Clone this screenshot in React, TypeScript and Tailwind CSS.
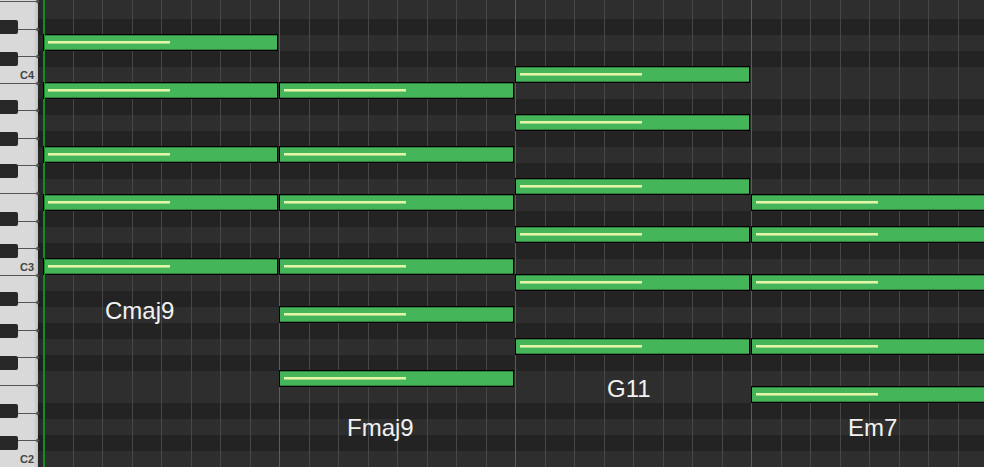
// one row per semitone, top to bottom. The first one (F4) is cut off by the top edge.
const ROWS = [
  { note: "F4" },
  { note: "E4" },
  { note: "D#4", black: true },
  { note: "D4" },
  { note: "C#4", black: true },
  { note: "C4", name: "C4" },
  { note: "B3" },
  { note: "A#3", black: true },
  { note: "A3" },
  { note: "G#3", black: true },
  { note: "G3" },
  { note: "F#3", black: true },
  { note: "F3" },
  { note: "E3" },
  { note: "D#3", black: true },
  { note: "D3" },
  { note: "C#3", black: true },
  { note: "C3", name: "C3" },
  { note: "B2" },
  { note: "A#2", black: true },
  { note: "A2" },
  { note: "G#2", black: true },
  { note: "G2" },
  { note: "F#2", black: true },
  { note: "F2" },
  { note: "E2" },
  { note: "D#2", black: true },
  { note: "D2" },
  { note: "C#2", black: true },
  { note: "C2", name: "C2" },
];

const FULL_LINES = [1, 83, 193, 275, 385];
const SHORT_LINES = [29, 56, 110, 138, 165, 221, 248, 302, 330, 357, 413, 440];

// row numbers count in the note grid, whose first row sits at y=3
const CHORDS = [
  { name: "Cmaj9", rows: [3, 6, 10, 13, 17] },
  { name: "Fmaj9", rows: [6, 10, 13, 17, 20, 24] },
  { name: "G11", rows: [5, 8, 12, 15, 18, 22] },
  { name: "Em7", rows: [13, 15, 18, 22, 25] },
];

function KeyLine({ y, short }: { y: number; short?: boolean }) {
  return (
    <div
      className={`absolute h-px bg-[#555555] ${short ? "left-[18px] w-[20px]" : "left-0 w-[38px]"}`}
      style={{ top: y }}
    >
      <div className="absolute -top-px right-[-1px] h-[3px] w-[3px] rotate-45 bg-[#555555]" />
    </div>
  );
}

function Note({ column, row }: { column: number; row: number }) {
  return (
    <div
      className="-mt-px h-[17px] w-[235px] border border-black bg-[#44b559] shadow-[inset_0_1px_0_#2f7f3f,inset_0_-1px_0_#2f7f3f]"
      style={{ gridColumn: column, gridRow: row }}
    >
      <div className="mt-[6px] ml-[4px] h-[2px] w-[122px] bg-[#e3f4a6] shadow-[0_1px_0_#9ed98a]" />
    </div>
  );
}

function ChordLabel({ text, column, row, className }: { text: string; column: number; row: number; className: string }) {
  return (
    <span
      className={`text-2xl leading-4 font-normal whitespace-nowrap text-[#f2f2f2] ${className}`}
      style={{ gridColumn: column, gridRow: row }}
    >
      {text}
    </span>
  );
}

export default function App() {
  return (
    <div className="relative h-[467px] w-[984px] overflow-hidden bg-[#2e2e2e] font-['Liberation_Sans',Arial,sans-serif]">
      <div className="-mt-[13px] flex flex-col">
        {ROWS.map(({ note, black, name }) => (
          <div key={note} className="flex h-4 shrink-0">
            <div className="flex w-[38px] shrink-0 items-center justify-end bg-gradient-to-r from-[#d9d9d9] from-[88%] to-[#c2c2c2]">
              {black ? <div className="mr-auto h-[14px] w-[18px] rounded-r-[2px] bg-[#282828]" /> : null}
              {name ? <span className="pr-[4px] text-[11px] font-bold text-[#444444]">{name}</span> : null}
            </div>
            <div className={`w-[6px] shrink-0 ${black ? "bg-[#1f1f1f]" : "bg-[#292929]"}`} />
            <div className={`flex-1 ${black ? "bg-[#232323]" : "bg-[#2e2e2e]"}`} />
          </div>
        ))}
      </div>

      {FULL_LINES.map((y) => (
        <KeyLine key={y} y={y} />
      ))}
      {SHORT_LINES.map((y) => (
        <KeyLine key={y} y={y} short />
      ))}

      {/* vertical grid over the rows */}
      <div className="absolute inset-y-0 left-[43px] flex">
        {Array.from({ length: 33 }, (_, i) => (
          <div
            key={i}
            className={`h-full w-[29.5px] shrink-0 border-l ${i % 8 === 0 ? "border-[#5c5c5c]" : "border-[#474747]"}`}
          />
        ))}
      </div>

      {/* notes and chord names, one column per bar */}
      <div className="absolute top-[3px] left-[43px] grid grid-cols-[repeat(4,236px)] grid-rows-[repeat(29,16px)]">
        {CHORDS.flatMap(({ name, rows }, i) =>
          rows.map((row) => <Note key={`${name}-${row}`} column={i + 1} row={row} />),
        )}
        <ChordLabel text="Cmaj9" column={1} row={20} className="-mt-[4px] ml-[62px]" />
        <ChordLabel text="Fmaj9" column={2} row={27} className="mt-[1px] ml-[68px]" />
        <ChordLabel text="G11" column={3} row={24} className="mt-[10px] ml-[92px]" />
        <ChordLabel text="Em7" column={4} row={27} className="mt-[1px] ml-[97px]" />
      </div>

      <div className="absolute inset-y-0 left-[44px] w-px bg-[#0f8f20]" />
    </div>
  );
}
